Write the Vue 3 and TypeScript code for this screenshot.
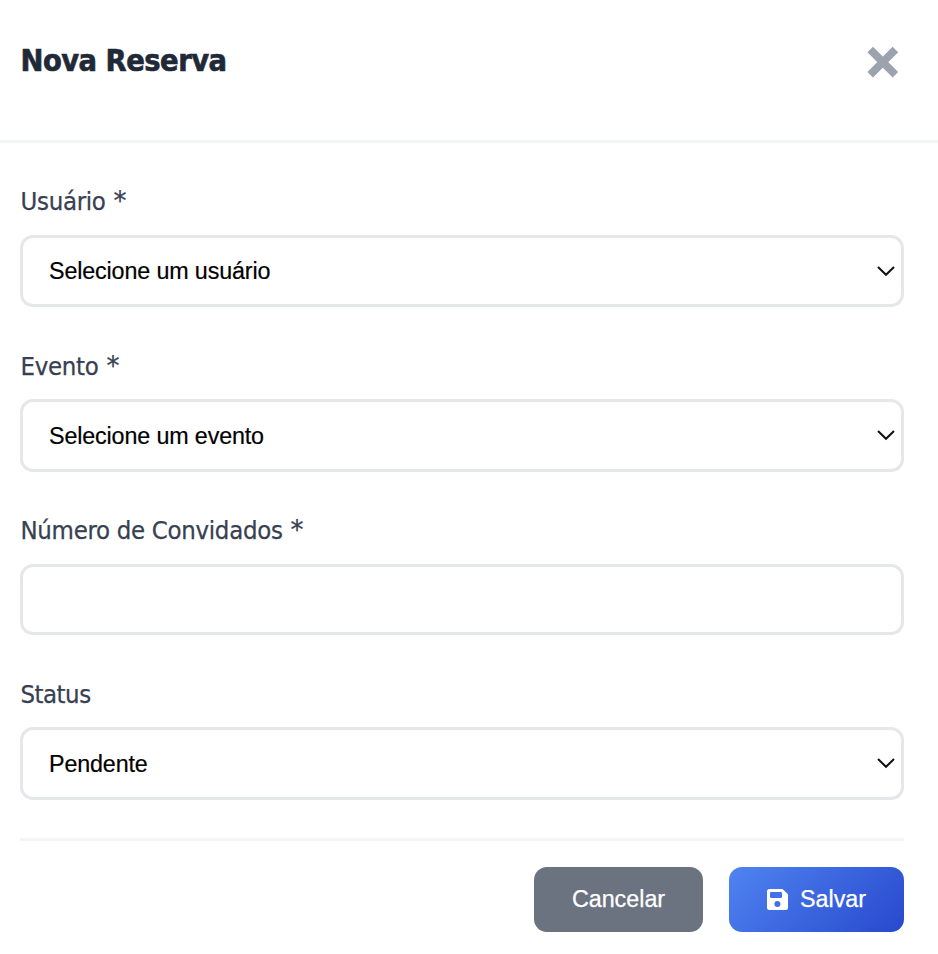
<script setup lang="ts">
import { reactive } from 'vue'

interface Field {
  key: 'usuario' | 'evento' | 'convidados' | 'status'
  label: string
  required?: boolean
  options?: string[]
}

const fields: Field[] = [
  { key: 'usuario', label: 'Usuário', required: true, options: ['Selecione um usuário'] },
  { key: 'evento', label: 'Evento', required: true, options: ['Selecione um evento'] },
  { key: 'convidados', label: 'Número de Convidados', required: true },
  { key: 'status', label: 'Status', options: ['Pendente'] },
]

const form = reactive({
  usuario: 'Selecione um usuário',
  evento: 'Selecione um evento',
  convidados: '',
  status: 'Pendente',
})
</script>

<template>
  <div class="modal">
    <header class="header">
      <h2 class="title">Nova Reserva</h2>
      <button class="close" type="button">
        <svg width="32" height="32" viewBox="0 0 32 32">
          <path d="M3.2 3.5 28.4 28.7M28.4 3.5 3.2 28.7" fill="none" stroke="#9ca3af" stroke-width="7.9" />
        </svg>
      </button>
    </header>
    <form class="form" @submit.prevent>
      <div v-for="f in fields" :key="f.key" class="group" :class="f.key">
        <label class="label" :class="f.key" :for="f.key">{{ f.label }}<span v-if="f.required" class="mark"> *</span></label>
        <div v-if="f.options" class="control">
          <select :id="f.key" v-model="form[f.key]" class="field">
            <option v-for="o in f.options" :key="o">{{ o }}</option>
          </select>
          <svg class="chevron" width="20" height="12" viewBox="0 0 20 12">
            <path d="M2 2 10 9.8 18 2" fill="none" stroke="#111" stroke-width="2" />
          </svg>
        </div>
        <input v-else :id="f.key" v-model="form.convidados" class="field" type="text" />
      </div>
      <footer class="actions">
        <button class="btn cancel" type="button">Cancelar</button>
        <button class="btn save" type="submit">
          <svg width="21" height="21" viewBox="0 0 21 21">
            <path fill="#fff" fill-rule="evenodd" d="M2.5 0H15.4L20.3 4.4Q21 5 21 6V18.5A2.5 2.5 0 0 1 18.5 21H2.5A2.5 2.5 0 0 1 0 18.5V2.5A2.5 2.5 0 0 1 2.5 0ZM4.2 3A1.2 1.2 0 0 0 3 4.2V7.8A1.2 1.2 0 0 0 4.2 9H13.8A1.2 1.2 0 0 0 15 7.8V4.2A1.2 1.2 0 0 0 13.8 3ZM10.4 12A3 3 0 1 0 10.4 18A3 3 0 0 0 10.4 12Z" />
          </svg>
          <span>Salvar</span>
        </button>
      </footer>
    </form>
  </div>
</template>

<style>
body {
  background: #fff;
}
</style>

<style scoped>
.modal {
  box-sizing: border-box;
  width: 938px;
  height: 954px;
  background: #fff;
  font-family: Tahoma, "DejaVu Sans Condensed", "DejaVu Sans", sans-serif;
  font-stretch: condensed;
}
.header {
  box-sizing: border-box;
  height: 143px;
  padding: 42px 39px 0 20px;
  display: flex;
  justify-content: space-between;
  align-items: flex-start;
  border-bottom: 3px solid #f3f4f6;
}
.title {
  margin: 0;
  padding-left: 0.5px;
  font-size: 30.5px;
  line-height: 37px;
  font-weight: 700;
  letter-spacing: -0.53px;
  color: #1f2937;
  -webkit-text-stroke: 0.6px #1f2937;
}
.close {
  margin-top: 4px;
  padding: 0;
  border: 0;
  background: none;
  line-height: 0;
}
.form {
  padding: 43px 34px 0 20px;
}
.group {
  display: flex;
  flex-direction: column;
  height: 164px;
}
.group.usuario {
  height: 165px;
}
.group.status {
  height: 159px;
}
.label {
  height: 49px;
  padding-left: 0.5px;
  line-height: 31px;
  font-size: 25.5px;
  letter-spacing: -0.3px;
  color: #374151;
  white-space: pre;
  -webkit-text-stroke: 0.25px #374151;
}
.label.evento,
.label.status {
  height: 48px;
}
.label.status {
  letter-spacing: -0.5px;
}
.mark {
  font-family: Tahoma, "DejaVu Sans", sans-serif;
  font-stretch: normal;
  font-size: 26px;
  line-height: 0;
}
.control {
  position: relative;
}
.field {
  display: block;
  box-sizing: border-box;
  width: 100%;
  height: 72px;
  padding: 0 26px;
  border: 3px solid #e5e7eb;
  border-radius: 13px;
  background: #fff;
  color: #000;
  appearance: none;
  outline: none;
  font: 23.3px "Liberation Sans", Arial, sans-serif;
  letter-spacing: -0.14px;
  -webkit-text-stroke: 0.2px #000;
}
.evento .field,
.status .field {
  height: 73px;
}
input.field {
  height: 71px;
}
.chevron {
  position: absolute;
  right: 8px;
  top: 30px;
  pointer-events: none;
}
.actions {
  box-sizing: border-box;
  height: 94px;
  border-top: 3px solid #f3f4f6;
  padding-top: 26px;
  display: flex;
  justify-content: flex-end;
  gap: 26px;
}
.btn {
  height: 65px;
  padding: 0;
  border: 0;
  border-radius: 13px;
  color: #fff;
  display: flex;
  align-items: center;
  justify-content: center;
  font: 23.3px "Liberation Sans", Arial, sans-serif;
  -webkit-text-stroke: 0.25px #fff;
}
.cancel {
  width: 169px;
  background: #6b7280;
}
.save {
  width: 175px;
  gap: 12px;
  background: linear-gradient(135deg, #4f84f1, #2848cd);
}
</style>
